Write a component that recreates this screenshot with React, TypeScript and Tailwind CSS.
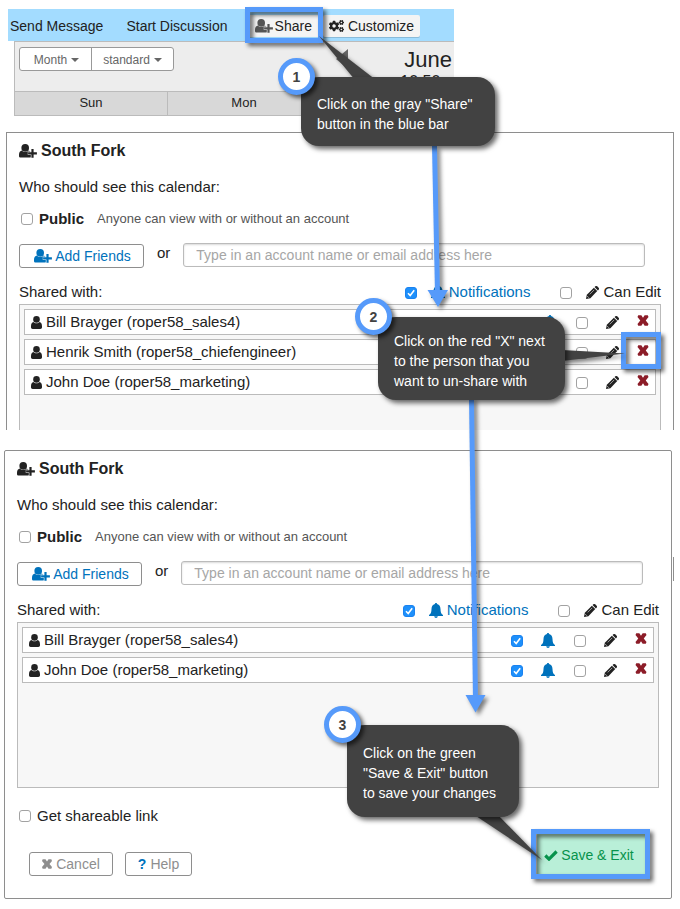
import type { ReactNode } from "react";
import { FaCogs } from "react-icons/fa";

type Person = { name: string; account: string };

const bill: Person = { name: "Bill Brayger", account: "roper58_sales4" };
const henrik: Person = { name: "Henrik Smith", account: "roper58_chiefengineer" };
const john: Person = { name: "John Doe", account: "roper58_marketing" };

function UserIcon() {
  return (
    <svg viewBox="0 0 11 13" className="h-[13px] w-[11px] shrink-0" fill="currentColor" aria-hidden="true">
      <circle cx="5.500" cy="3.400" r="3.300" />
      <path d="M0 10.200C0 7.500 1 6.200 2.400 5.900 3.200 6.800 4.300 7.300 5.500 7.300s2.300-.5 3.100-1.400C10 6.200 11 7.500 11 10.200v1.100c0 1-.7 1.700-1.700 1.700H1.700C.7 13 0 12.300 0 11.300z" />
    </svg>
  );
}

function UserPlusIcon({ gap = "#ffffff" }: { gap?: string }) {
  return (
    <svg viewBox="0 0 18 14" className="h-[14px] w-[18px] shrink-0" aria-hidden="true">
      <circle cx="6.200" cy="3.900" r="3.800" fill="currentColor" />
      <path
        d="M0 10.800C0 8.300 1.200 6.800 3 6.500 3.900 7.500 5 8 6.200 8s2.300-.5 3.200-1.500c1.800.3 3 1.800 3 4.300v1.100c0 1-.7 1.700-1.700 1.700H1.700C.7 13.600 0 12.900 0 11.900z"
        fill="currentColor"
      />
      <path d="M13.500 4.300v9.700M8.800 9.300h9.200" stroke={gap} strokeWidth="3.400" />
      <path d="M13.500 4.900v8.800M9.100 9.300h8.800" stroke="currentColor" strokeWidth="2.200" />
    </svg>
  );
}

function BellIcon() {
  return (
    <svg viewBox="0 0 14 15" className="h-[15px] w-[14px] shrink-0 text-[#0072bc]" fill="currentColor" aria-hidden="true">
      <path d="M7 0c.7 0 1.100.5 1.100 1.100C10.500 1.600 11.400 3.500 11.500 6c.1 3 .5 4.800 2.500 6v1H0V12c2-1.200 2.400-3 2.500-6 .1-2.500 1-4.400 3.400-4.900C5.900.5 6.300 0 7 0z" />
      <path d="M5.200 13.300h3.600C8.600 14.300 7.900 15 7 15s-1.600-.7-1.800-1.700z" />
    </svg>
  );
}

function PencilIcon() {
  return (
    <svg viewBox="0 0 14 14" className="h-[13px] w-[13px] shrink-0" fill="currentColor" aria-hidden="true">
      <path d="M9.200 1.200l3.600 3.600.8-.8c.6-.6.6-1.500 0-2.100L12.100.4c-.6-.6-1.500-.6-2.100 0z" />
      <path d="M8.500 1.900L.9 9.300 0 14l4.700-.9 7.400-7.600z" />
      <path d="M4 9l4.800-4.800" stroke="#ffffff" strokeWidth=".6" />
      <path d="M1.600 11.200l1.200 1.200" stroke="#ffffff" strokeWidth="1" />
    </svg>
  );
}

function CrossIcon({ className = "h-[11px] w-3" }: { className?: string }) {
  return (
    <svg viewBox="0 0 12 12" className={`shrink-0 ${className}`} fill="currentColor" aria-hidden="true">
      <path d="M0 2.300L.8.300H4.200L6 2.900 7.800.3h3.400L12 2.300 9 6l3 3.700-.8 2H7.800L6 9.100 4.200 11.700H.8L0 9.700 3 6z" />
    </svg>
  );
}

function CheckIcon() {
  return (
    <svg viewBox="0 0 14 11" className="h-[11px] w-[14px] shrink-0" fill="none" aria-hidden="true">
      <path d="M1.300 5.500L5 9.100 12.600 1.500" stroke="currentColor" strokeWidth="3.200" />
    </svg>
  );
}

function Caret() {
  return (
    <svg viewBox="0 0 8 4" className="h-1 w-2" fill="currentColor" aria-hidden="true">
      <path d="M0 0h8L4 4z" />
    </svg>
  );
}

function Checkbox({ id, checked, label }: { id?: string; checked?: boolean; label?: string }) {
  return (
    <span className="relative block size-3 shrink-0">
      <input
        id={id}
        type="checkbox"
        defaultChecked={checked}
        aria-label={label}
        className="peer block size-3 appearance-none rounded-[3px] border border-[#a2a2a2] bg-white checked:border-[#1a82f0] checked:bg-[#1e90fb]"
      />
      <svg viewBox="0 0 12 12" className="pointer-events-none absolute inset-0 hidden size-3 peer-checked:block" fill="none" aria-hidden="true">
        <path d="M3 6.300l2.200 2.300L9.200 3.200" stroke="#ffffff" strokeWidth="1.600" />
      </svg>
    </span>
  );
}

function PersonRow({ person }: { person: Person }) {
  return (
    <li className="flex h-[26px] items-center border border-[#bbbbbb] bg-white px-1.5">
      <UserIcon />
      <span className="ml-1 flex-1">
        {person.name} ({person.account})
      </span>
      <span className="mt-0.5">
        <Checkbox checked label={`Notify ${person.name}`} />
      </span>
      <span className="ml-[18px]">
        <BellIcon />
      </span>
      <span className="mt-0.5 ml-[19px]">
        <Checkbox label={`${person.name} can edit`} />
      </span>
      <span className="ml-[18px]">
        <PencilIcon />
      </span>
      <button type="button" aria-label={`Remove ${person.name}`} className="mb-1 ml-[18px] text-[#8c1c28]">
        <CrossIcon />
      </button>
    </li>
  );
}

function SharePanel({ id, people, className, listClass, children }: {
  id: string;
  people: Person[];
  className: string;
  listClass: string;
  children?: ReactNode;
}) {
  return (
    <section className={`border-[#8e8e8e] bg-white px-3 pt-2 text-[15px] leading-5 ${className}`}>
      <h2 className="flex items-center gap-1 text-base leading-5 font-bold">
        <UserPlusIcon />
        South Fork
      </h2>
      <p className="mt-4">Who should see this calendar:</p>
      <div className="mt-3 flex items-center pl-0.5">
        <Checkbox id={`${id}-public`} />
        <label htmlFor={`${id}-public`} className="ml-1.5 flex items-center">
          <span className="font-bold">Public</span>
          <span className="ml-[13px] text-[13px] text-[#555555]">Anyone can view with or without an account</span>
        </label>
      </div>
      <div className="mt-3.5 mr-4 flex items-start">
        <button type="button" className="mt-px flex h-6 w-[125px] items-center justify-center gap-[3px] rounded-[3px] border border-[#8e8e8e] pl-0.5 text-sm text-[#0072bc]">
          <UserPlusIcon />
          Add Friends
        </button>
        <label htmlFor={`${id}-account`} className="mx-[13px]">
          or
        </label>
        <input
          id={`${id}-account`}
          type="text"
          placeholder="Type in an account name or email address here"
          className="h-6 min-w-0 flex-1 rounded-[3px] border border-[#bbbbbb] px-3 text-sm shadow-[inset_0_1px_2px_rgba(0,0,0,0.15)] placeholder:text-[#a6a6a6]"
        />
      </div>
      <div className="mt-3.5 flex items-center">
        <span className="flex-1">Shared with:</span>
        <span className="mt-0.5">
          <Checkbox id={`${id}-notify`} checked />
        </span>
        <label htmlFor={`${id}-notify`} className="ml-3.5 flex items-center gap-1 text-[#0072bc]">
          <BellIcon />
          Notifications
        </label>
        <span className="mt-0.5 ml-[30px]">
          <Checkbox id={`${id}-edit`} />
        </span>
        <label htmlFor={`${id}-edit`} className="ml-3.5 flex items-center gap-1">
          <PencilIcon />
          Can Edit
        </label>
      </div>
      <ul className={`mt-0.5 flex flex-col gap-1 border-[#bbbbbb] bg-[#f7f7f7] p-1 ${listClass}`}>
        {people.map((person) => (
          <PersonRow key={person.account} person={person} />
        ))}
      </ul>
      {children}
    </section>
  );
}

function Callout({ step, className, children }: { step: number; className: string; children: ReactNode }) {
  return (
    <div className={`absolute flex items-center rounded-[18px] bg-[#424242] pt-1 pl-4 text-sm leading-5 whitespace-nowrap text-white shadow-[3px_3px_5px_rgba(0,0,0,0.6)] ${className}`}>
      <span className="absolute -top-[19px] -left-[23px] flex size-[37px] items-center justify-center rounded-full border-[5px] border-[#569afa] bg-white text-sm font-bold text-[#424242] shadow-[3px_3px_4px_rgba(0,0,0,0.6)]">
        {step}
      </span>
      <p>{children}</p>
    </div>
  );
}

function Highlight({ className }: { className: string }) {
  return <div className={`absolute border-[5px] border-[#569afa] drop-shadow-[3px_3px_2px_rgba(0,0,0,0.6)] ${className}`} />;
}

function Annotations() {
  return (
    <div className="pointer-events-none absolute inset-0">
      <Highlight className="top-[7px] left-[245px] h-9 w-[78px]" />
      <Highlight className="top-[332px] left-[621px] h-[37px] w-10" />
      <Highlight className="top-[829px] left-[531px] h-[50px] w-[119px]" />
      <svg className="absolute top-0 left-0 h-[909px] w-[680px] drop-shadow-[3px_3px_2px_rgba(0,0,0,0.5)]" viewBox="0 0 680 909" aria-hidden="true">
        <path d="M434.500 146L437.500 294" stroke="#569afa" strokeWidth="5" />
        <path d="M427.500 290h20.500L438 307z" fill="#569afa" />
        <path d="M471.500 398L475.500 700" stroke="#569afa" strokeWidth="5" />
        <path d="M465.500 695H485.500L475.500 712.500z" fill="#569afa" />
        <path d="M319 36L355 80H376z" fill="#424242" />
        <path d="M625 353.500L562 350v11z" fill="#424242" />
        <path d="M542 860L473 814h24z" fill="#424242" />
      </svg>
      <Callout step={1} className="top-[77px] left-[301px] h-[69px] w-[194px]">
        Click on the gray "Share"
        <br />
        button in the blue bar
      </Callout>
      <Callout step={2} className="top-[317px] left-[378px] h-[83px] w-[187px]">
        Click on the red "X" next
        <br />
        to the person that you
        <br />
        want to un-share with
      </Callout>
      <Callout step={3} className="top-[725px] left-[347px] h-[92px] w-[172px]">
        Click on the green
        <br />
        "Save &amp; Exit" button
        <br />
        to save your changes
      </Callout>
    </div>
  );
}

export default function App() {
  return (
    <main className="relative overflow-hidden bg-white pt-[9px] pb-2.5 font-['Liberation_Sans',Arial,sans-serif] text-[#222222]">
      <div className="ml-2 w-[446px] max-w-full overflow-hidden">
        <nav className="flex h-8 items-center bg-[#a3dcff] pt-0.5 pl-0.5 text-sm">
          <a href="#message">Send Message</a>
          <a href="#discussion" className="ml-[23px]">
            Start Discussion
          </a>
          <button type="button" className="ml-[21px] flex h-[22px] items-center gap-0.5 bg-[#f4f4f4] px-1.5 text-[#222222]">
            <span className="text-[#555555]">
              <UserPlusIcon gap="#f4f4f4" />
            </span>
            Share
          </button>
          <button type="button" className="ml-[5px] flex h-[22px] items-center gap-1 rounded-[2px] bg-[#f4f4f4] px-1.5 shadow-[0_1px_0_rgba(0,0,0,0.15)]">
            <FaCogs className="h-[14px] w-[15px]" />
            Customize
          </button>
        </nav>
        <div className="ml-1.5 border-t border-l border-[#bbbbbb] bg-[#ededed]">
          <div className="flex h-[49px] items-start justify-between overflow-hidden pl-1">
            <div className="mt-[5px] flex h-6 rounded-[3px] border border-[#999999] bg-white text-xs text-[#666666]">
              <button type="button" className="flex w-[72px] items-center justify-center gap-1 border-r border-[#999999] pt-0.5 pl-0.5">
                Month <Caret />
              </button>
              <button type="button" className="flex w-[81px] items-center justify-center gap-1 pt-0.5">
                standard <Caret />
              </button>
            </div>
            <div className="flex items-start">
              <button type="button" aria-label="Previous month" className="mt-[7px] mr-14 text-[#666666]">
                <svg viewBox="0 0 12 20" className="h-5 w-3" fill="currentColor" aria-hidden="true">
                  <path d="M12 0v20L0 10z" />
                </svg>
              </button>
              <div className="mr-0.5">
                <p className="mt-1.5 text-[22px] leading-6">June</p>
                <p className="-ml-1 text-base leading-5">10:50</p>
              </div>
            </div>
          </div>
          <div className="grid h-[25px] grid-cols-[153px_153px_1fr] border-y border-[#bbbbbb] bg-[#d8d8d8] text-center text-[13px] leading-[22px]">
            <span className="border-r border-[#bbbbbb]">Sun</span>
            <span className="border-r border-[#bbbbbb]">Mon</span>
            <span />
          </div>
        </div>
      </div>

      <SharePanel
        id="before"
        people={[bill, henrik, john]}
        className="mt-4 mr-1.5 ml-1.5 border-x border-t"
        listClass="h-[126px] border-x border-t"
      />

      <div className="relative mt-5 mr-2 ml-1">
        <div className="absolute top-[107px] -right-0.5 h-6 w-px bg-[#8e8e8e]" />
        <SharePanel id="after" people={[bill, john]} className="rounded-[2px] border pb-[22px]" listClass="h-[166px] border">
          <div className="mt-[18px] flex items-center gap-1.5 pl-0.5">
            <Checkbox id="shareable" />
            <label htmlFor="shareable">Get shareable link</label>
          </div>
          <div className="mt-2 flex items-end gap-3 pr-3 pl-3 text-sm text-[#8e8e8e]">
            <button type="button" className="flex h-6 w-[84px] items-center justify-center gap-1 rounded-[3px] border border-[#8e8e8e]">
              <CrossIcon className="size-2.5" />
              Cancel
            </button>
            <button type="button" className="flex h-6 w-[67px] items-center justify-center gap-1 rounded-[3px] border border-[#8e8e8e]">
              <span className="font-bold text-[#0072bc]">?</span>
              Help
            </button>
            <button type="button" className="ml-auto flex h-[42px] w-[110px] items-center justify-center gap-[3px] bg-[#b9efd8] pr-1.5 text-[#07934c]">
              <CheckIcon />
              Save &amp; Exit
            </button>
          </div>
        </SharePanel>
      </div>

      <Annotations />
    </main>
  );
}
